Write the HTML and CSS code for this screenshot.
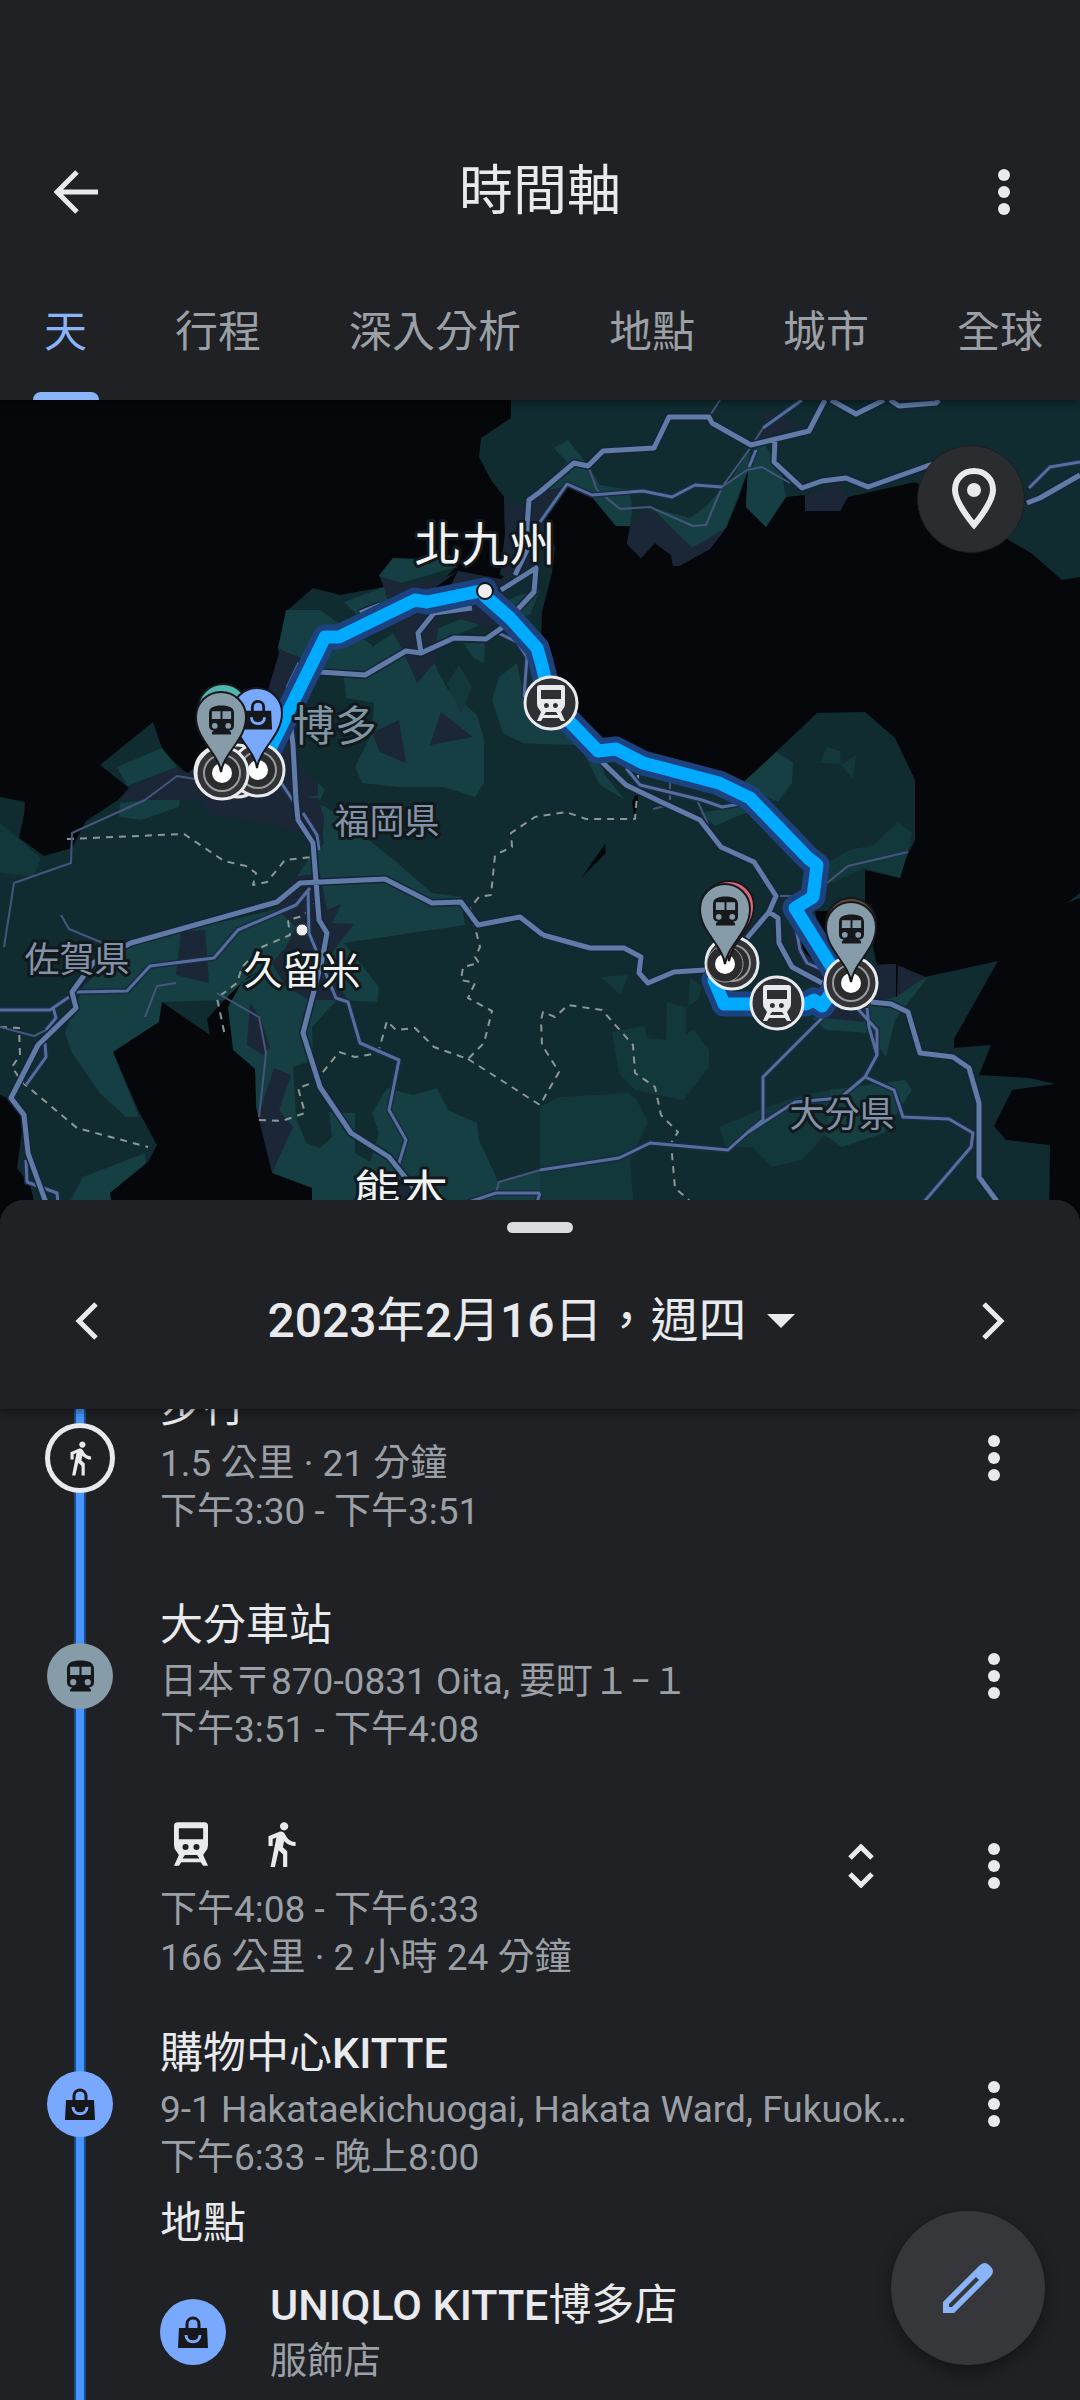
FILE: index.html
```
<!DOCTYPE html>
<html lang="zh-Hant">
<head>
    <meta charset="UTF-8">
    <meta name="viewport" content="width=device-width, initial-scale=1.0">
    <title>時間軸</title>
    <link rel="stylesheet" href="styles.css">
</head>
<body>
    <!-- Shared icons -->
    <svg class="sprite" aria-hidden="true">
        <symbol id="icon-more" viewBox="0 0 12 46">
            <circle cx="6" cy="6" r="6"/><circle cx="6" cy="23" r="6"/><circle cx="6" cy="40" r="6"/>
        </symbol>
        <symbol id="icon-walk" viewBox="0 0 24 24">
            <path d="M13.5 5.5c1.1 0 2-.9 2-2s-.9-2-2-2-2 .9-2 2 .9 2 2 2zM9.8 8.9L7 23h2.1l1.8-8 2.1 2v6h2v-7.5l-2.1-2 .6-3C14.8 12 16.8 13 19 13v-2c-1.9 0-3.5-1-4.3-2.4l-1-1.6c-.4-.6-1-1-1.7-1-.3 0-.5.1-.8.1L6 8.3V13h2V9.6l1.8-.7z"/>
        </symbol>
        <symbol id="icon-station" viewBox="0 0 26 30">
            <path fill-rule="evenodd" d="M0 8C0 2 5 0 13 0s13 2 13 8v13c0 3-2 5-5 5l2 2v2H3v-2l2-2c-3 0-5-2-5-5zM3 6v8h9V6zM14 6v8h9V6zM6 18a3 3 0 1 0 0 6 3 3 0 0 0 0-6zM20 18a3 3 0 1 0 0 6 3 3 0 0 0 0-6z"/>
        </symbol>
        <symbol id="icon-train" viewBox="0 0 28 36">
            <path fill-rule="evenodd" d="M3 0h22q3 0 3 3v16q0 3-2 5l-2 3 4 9h-4l-2-3H6l-2 3H0l4-9-2-3q-2-2-2-5V3q0-3 3-3zM4 5v9h20V5zM9.500 18a2.500 2.500 0 1 0 0 5 2.500 2.500 0 0 0 0-5zM18.500 18a2.500 2.500 0 1 0 0 5 2.500 2.500 0 0 0 0-5zM9 27l-2 3h14l-2-3z"/>
        </symbol>
        <symbol id="icon-bag" viewBox="0 0 32 32">
            <path fill="none" stroke="currentColor" stroke-width="3" d="M10 14V8c0-8 12-8 12 0v6"/>
            <path d="M2 12h28l1 20H1z"/>
            <path class="smile" d="M9 19c0 9 14 9 14 0"/>
        </symbol>
        <symbol id="pin" viewBox="-28 -80 56 84" overflow="visible">
            <path stroke="#17181b" stroke-width="2" d="M0 2C-3-18-25-30-25-53a25 25 0 0 1 50 0C25-30 3-18 0 2z"/>
        </symbol>
        <symbol id="stop" viewBox="-29 -29 58 58">
            <circle r="26" fill="#333437" stroke="#e8eaed" stroke-width="3"/>
            <circle r="18" fill="#2b2c2e" stroke="#9a9b9c" stroke-width="2"/>
            <circle r="10" fill="#fff"/>
        </symbol>
        <symbol id="train-badge" viewBox="-29 -29 58 58">
            <circle r="26" fill="#2f3034" stroke="#e8eaed" stroke-width="3"/>
            <use href="#icon-train" x="-14" y="-18" width="28" height="36" fill="#e8eaed"/>
        </symbol>
    </svg>

    <div class="app">
        <header class="top">
            <div class="toolbar">
                <button class="icon-btn" aria-label="返回">
                    <svg class="back-icon" viewBox="0 0 44 44"><path d="M44 22H4M23 2L3 22l20 20"/></svg>
                </button>
                <h1>時間軸</h1>
                <button class="icon-btn" aria-label="更多選項"><svg class="more-icon"><use href="#icon-more"/></svg></button>
            </div>
            <nav class="tabs">
                <a href="#day" class="active">天</a>
                <a href="#trips">行程</a>
                <a href="#insights">深入分析</a>
                <a href="#places">地點</a>
                <a href="#cities">城市</a>
                <a href="#world">全球</a>
            </nav>
        </header>

        <!-- Map -->
        <section class="map" aria-label="地圖">
            <svg class="map-canvas" viewBox="0 0 1080 824" preserveAspectRatio="xMidYMin slice">
                <!-- land -->
                <g class="land">
                    <polygon points="511,0 511,18 481,38 479,57 491,80 504,97 505,133 516,165 540,180 555,147 543,120 568,87 592,97 616,126 630,126 627,144 641,158 655,143 671,155 673,166 679,166 710,149 726,128 738,100 748,70 746,107 766,127 786,97 805,95 805,111 840,111 848,97 884,89 915,82 1005,138 1031,153 1062,180 1080,177 1080,0"/>
                    <polygon points="0,397 25,402 24,415 19,438 44,456 72,448 86,421 118,400 129,388 100,365 153,322 163,351 187,374 225,340 268,290 280,272 278,248 288,210 313,188 340,195 384,187 379,175 393,158 425,163 450,155 456,167 436,187 458,171 500,180 516,165 555,147 552,173 542,212 541,245 553,300 580,330 600,350 660,360 720,380 765,383 760,367 817,313 865,312 895,338 915,380 915,440 905,460 900,478 865,470 865,511 877,565 895,564 925,577 998,561 954,639 954,648 991,645 979,675 1030,678 1055,684 1012,690 994,726 1006,740 1050,745 1049,824 0,824"/>
                    <polygon points="1067,503 1080,493 1080,498"/>
                </g>
                <g class="woods">
                    <polygon points="554,48 568,40 588,65 600,85 630,90 632,110 630,126 616,126 592,97 568,87 548,112 550,80 567,62"/>
                    <polygon points="652,108 692,148 726,128 748,70 750,47 733,77 705,107 690,118"/>
                    <polygon points="748,67 760,37 781,70 786,97 766,127 746,107"/>
                    <polygon points="379,176 393,158 451,160 456,167 401,183"/>
                    <polygon points="286,210 320,210 344,227 372,245 370,255 344,278 320,270 278,248"/>
                    <polygon points="344,202 384,187 392,215 365,223"/>
                    <polygon points="372,247 393,233 413,267 417,283 434,263 448,290 477,315 484,340 484,383 475,397 444,387 399,387 362,383 355,367 372,333 374,303 346,298 344,277"/>
                    <polygon points="427,233 470,215 520,195 540,190 530,215 480,225 432,245"/>
                    <polygon points="463,243 485,243 484,263 474,258"/>
                    <polygon points="499,277 517,263 524,297 545,300 575,335 595,348 605,375 625,400 600,385 580,345 540,344 523,343 503,333 492,300"/>
                    <polygon points="760,367 776,352 793,362 792,383 778,402 740,385"/>
                    <polygon points="117,367 162,348 177,367 127,386"/>
                    <polygon points="120,403 180,396 179,407 141,420 119,417"/>
                    <polygon points="295,365 318,383 325,390 320,400 300,395"/>
                    <polygon points="317,403 331,410 394,460 432,493 461,497 465,525 344,543 379,587 377,602 337,600 312,627 313,660 293,667 296,717 306,743 320,748 332,737 329,712 355,713 355,753 370,762 379,733 372,713 387,688 413,695 437,688 448,710 477,723 479,740 499,783 540,770 540,824 312,824 312,788 272,773 256,707 255,669 233,650 227,600 162,602 159,622 113,652 139,717 126,717 100,693 72,653 65,633 83,587 127,543 275,510 310,457 324,443"/>
                    <polygon points="83,777 145,753 146,763 110,793 115,824 58,824"/>
                    <polygon points="869,603 928,577 895,620 886,657 870,633 826,630 812,618"/>
                    <polygon points="830,690 905,680 912,690 884,733 842,747 825,735"/>
                    <polygon points="700,413 775,400 715,426"/>
                </g>
                <g class="scrub">
                    <polygon points="0,423 41,458 33,477 0,473"/>
                    <polygon points="540,707 560,697 629,693 637,700 648,723 630,760 635,824 540,824"/>
                    <polygon points="612,632 645,626 647,638 666,640 667,602 688,608 690,577 702,587 698,600 686,607 686,635 693,629 709,650 709,667 683,700 635,690 619,673"/>
                    <polygon points="719,727 753,713 795,697 830,690 825,735 802,760 771,767 753,747 726,747"/>
                    <polygon points="815,470 850,450 874,445 898,422 912,433 908,452 900,478 864,468 833,483"/>
                    <polygon points="827,347 840,351 841,365 856,355 853,379 840,364 820,363"/>
                    <polygon points="600,577 628,575 621,595"/>
                    <polygon points="447,283 459,265 472,287 461,314"/>
                </g>
                <g class="urban">
                    <polygon points="504,97 525,110 540,92 566,86 545,120 540,150 525,170 512,180 500,175 505,133"/>
                    <polygon points="630,126 650,108 692,148 726,128 710,149 679,166 673,166 671,155 655,143 641,158 627,144"/>
                    <polygon points="805,95 840,83 848,97 840,111 805,111"/>
                    <polygon points="764,10 802,25 781,33 762,37"/>
                    <polygon points="380,177 401,183 440,180 458,171 506,180 510,205 490,228 440,213 434,263 417,283 396,235 389,200"/>
                    <polygon points="280,250 320,265 300,320 295,365 318,383 318,395 295,400 190,400 187,374 230,340 268,290"/>
                    <polygon points="195,398 318,398 324,418 322,443 300,433 262,423 213,415"/>
                    <polygon points="399,320 406,363 380,352 372,333"/>
                    <polygon points="441,312 473,337 430,345"/>
                    <polygon points="129,388 177,367 195,377 195,400 120,400"/>
                    <polygon points="181,532 205,530 209,583 176,575"/>
                    <polygon points="293,477 320,473 327,510 341,504 332,523 354,524 324,563 348,600 310,600 286,587 272,563 286,547 296,527 275,507"/>
                    <polygon points="250,603 260,617 270,647 263,655 247,645"/>
                    <polygon points="274,668 291,675 279,710 293,727 272,773 258,717"/>
                    <polygon points="390,780 420,775 430,824 390,824"/>
                    <polygon points="796,515 830,560 877,565 895,564 925,577 896,597 869,603 864,622 826,618 800,560 788,540"/>
                </g>
                <g class="water">
                    <polygon points="162,602 210,635 207,619 227,597 248,577 262,570 242,582 228,607 233,650 255,669 256,707 272,773 312,788 312,824 115,824 110,793 148,762 157,745 139,712 113,652 159,622"/>
                    <polygon points="0,695 11,700 24,717 17,768 30,785 40,824 0,824"/>
                    <polygon points="605,444 606,453 582,477"/>
                    <polygon points="815,511 865,511 865,560 829,570 800,550 802,540 820,535"/>
                    <polygon points="632,402 638,390 638,405 634,416"/>
                    <polygon points="896,564 898,564 897,597 896,597"/>
                    <polygon points="436,187 458,171 450,187"/>
                </g>

                <!-- prefecture borders -->
                <g class="border">
                    <path d="M67 439L184 434 224 461 246 466 256 473 253 485 267 482 285 460 312 457 317 473 318 500 303 516 288 520 290 535 262 547 242 567 237 583 217 598 225 636"/>
                    <path d="M638 375V385L635 419H586L566 412 535 417 511 433 512 447 495 455 491 495 479 497 470 508 480 547 475 557 479 563 463 567 461 580 475 583 468 598 492 611 484 643 468 659 434 647 415 628 396 630 387 621 378 653 355 657 339 652 315 682 298 688 305 713 282 721 258 720"/>
                    <path d="M468 659L540 705 559 672 542 645 541 620 543 612 555 617 568 605 602 610 633 645 635 673 655 687 661 715 678 732 671 743 675 788 700 810"/>
                    <path d="M0 627L19 628 20 655 12 667 22 682 77 728 148 747"/>
                </g>

                <!-- roads -->
                <g class="road-thin">
                    <path d="M589 68L597 90 620 109 650 107 693 126 706 125 722 87 751 47 763 28M722 87L747 70 762 67 790 83M709 17L720 0"/>
                    <path d="M195 379L177 376 145 400 72 433 71 463 14 483 4 547M61 515L69 529 103 543M176 583L157 586 145 617M217 593L259 617 266 653 259 717M0 627L34 636 46 630"/>
                    <path d="M776 496L802 496M827 483L848 466 908 452M697 400L708 424M653 409L665 406M670 382V400M496 793L499 782 540 770"/>
                </g>
                <g class="road-mid-case">
                    <path id="mid" d="M540 122L567 84 592 95 643 91 672 97 695 85 722 87M763 28L802 0M756 50L749 67M1029 88L1050 67 1080 62M76 592L127 591 150 566 214 558 238 530 296 505 310 488M308 490L309 533 336 598 348 602 360 643 399 660 389 710 406 740 399 763M0 610L50 610 69 597M53 607L56 618 46 630M45 643L46 657 26 685M26 760L27 782 57 793 60 824M460 805L496 793 540 793M494 231L517 242 527 257 524 297M287 288L299 263M303 413L317 435 319 450M280 381L294 402M626 368L640 385 702 400 722 407 740 404M540 770L619 758 650 743 728 750 747 733 795 702 840 698 865 677 894 690 903 717 949 719 973 733 971 747 905 824M747 733L763 720 763 677 822 618M865 677L877 655 877 630 857 608M867 608L869 627 877 655M796 528L800 550 807 563 825 571M540 793L530 824"/>
                </g>
                <use href="#mid" class="road-mid"/>
                <g class="road-case">
                    <path id="main" d="M515 175L527 150 527 127 529 100 540 92 574 63 588 66 603 51 654 48 669 17 709 17 712 23 751 45 809 31 825 0M831 0L856 14 884 0M890 0L899 6 936 3 939 0M775 40L774 62 802 88 822 81 846 78 868 87 927 66 950 60M1027 103L1040 98 1080 75M501 190L536 168 534 192 517 210 503 227 486 239 454 238 421 253 406 251 365 275 320 272M472 208L434 213 418 233 421 253M360 213L380 205M291 328L293 345 296 400 298 420 313 443 319 520 327 533 322 560 303 633 320 687 351 733 389 757 413 787 420 824M543 535L520 517 478 525 461 502 432 503 385 479 300 483 277 502 131 543 93 563 72 592 76 608 38 645 11 698 24 715 28 753 45 800 52 824M543 535L590 548 624 548 641 557 639 573 648 583 674 572 705 570M602 362L626 385 657 400 700 420 721 447 754 462 776 496 769 512 747 538M769 512L778 518 779 543 792 567 822 583M871 602L891 604 908 612 920 653 953 657 969 668 979 703 979 777 996 800 1008 824"/>
                </g>
                <use href="#main" class="road"/>

                <!-- travelled route -->
                <g class="route-case">
                    <path id="route" d="M262 365L325 237H339L415 200 427 202 485 190V196L510 218 537 248 541 262 551 303 571 323 598 351 616 349 643 363 719 383 750 398 808 458 817 465 813 497 795 508 840 580M714 580L724 604H806L814 600 822 606 833 590"/>
                </g>
                <use href="#route" class="route"/>

                <!-- labels -->
                <g class="label">
                    <text class="city" x="485" y="161">北九州</text>
                    <text class="area" x="335" y="341">博多</text>
                    <text class="pref" x="387" y="434">福岡県</text>
                    <text class="pref" x="77" y="572">佐賀県</text>
                    <text class="town" x="302" y="584">久留米</text>
                    <text class="city" x="401" y="809">熊本</text>
                    <text class="pref" x="842" y="727">大分県</text>
                </g>
                <circle cx="485" cy="191" r="8" fill="#eee" stroke="#111" stroke-width="2"/>
                <circle cx="302" cy="530" r="6" fill="#eee" stroke="#333" stroke-width="1"/>

                <!-- stops, badges and pins -->
                <use href="#stop" x="192" y="343" width="58" height="58"/>
                <use href="#stop" x="208" y="342" width="58" height="58"/>
                <use href="#stop" x="229" y="341" width="58" height="58"/>
                <use href="#stop" x="193" y="344" width="58" height="58"/>
                <use href="#stop" x="703" y="534" width="58" height="58"/>
                <circle cx="725" cy="564" r="18" fill="#2b2c2e" stroke="#9a9b9c"/>
                <circle cx="725" cy="564" r="10" fill="#fff"/>
                <use href="#stop" x="822" y="554" width="58" height="58"/>
                <use href="#train-badge" x="522" y="274" width="58" height="58"/>
                <use href="#train-badge" x="748" y="574" width="58" height="58"/>

                <use href="#pin" x="195" y="282" width="56" height="84" fill="#50b5ad"/>
                <use href="#pin" x="229" y="286" width="56" height="84" fill="#78a9ff"/>
                <use href="#icon-bag" x="243" y="299" width="30" height="31" class="glyph"/>
                <use href="#pin" x="193" y="290" width="56" height="84" fill="#869ca8"/>
                <use href="#icon-station" x="209" y="305" width="25" height="30" class="glyph"/>
                <use href="#pin" x="701" y="479" width="56" height="84" fill="#e0667f"/>
                <use href="#pin" x="697" y="482" width="56" height="84" fill="#869ca8"/>
                <use href="#icon-station" x="713" y="496" width="25" height="30" class="glyph"/>
                <use href="#pin" x="823" y="496" width="56" height="84" fill="#5d4b42"/>
                <use href="#pin" x="823" y="500" width="56" height="84" fill="#869ca8"/>
                <use href="#icon-station" x="839" y="514" width="25" height="30" class="glyph"/>
            </svg>
            <button class="map-btn" aria-label="顯示地點">
                <svg viewBox="0 0 44 62"><path d="M22 3C11 3 3 11 3 22c0 13 19 35 19 35s19-22 19-35C41 11 33 3 22 3z"/><circle cx="22" cy="22" r="7"/></svg>
            </button>
        </section>

        <!-- Bottom sheet -->
        <main class="sheet">
            <div class="sheet-head">
                <div class="handle"></div>
                <div class="date-row">
                    <button class="day-btn" aria-label="前一天"><svg viewBox="0 0 24 38"><path d="M21 2L4 19l17 17"/></svg></button>
                    <button class="date-btn"><span class="date"><b>2023</b>年<b>2</b>月<b>16</b>日，週四</span><span class="caret"></span></button>
                    <button class="day-btn" aria-label="後一天"><svg viewBox="0 0 24 38"><path d="M3 2l17 17L3 36"/></svg></button>
                </div>
            </div>

            <div class="timeline">
                <article class="entry">
                    <div class="marker-col"><span class="marker walk"><svg><use href="#icon-walk"/></svg></span></div>
                    <div class="info">
                        <h2>步行</h2>
                        <p>1.5 公里 · 21 分鐘</p>
                        <p>下午3:30 - 下午3:51</p>
                    </div>
                    <button class="more" aria-label="更多選項"><svg class="more-icon"><use href="#icon-more"/></svg></button>
                </article>

                <article class="entry stop">
                    <div class="marker-col"><span class="marker station"><svg><use href="#icon-station"/></svg></span></div>
                    <div class="info">
                        <h2>大分車站</h2>
                        <p>日本〒870-0831 Oita, 要町１−１</p>
                        <p>下午3:51 - 下午4:08</p>
                    </div>
                    <button class="more" aria-label="更多選項"><svg class="more-icon"><use href="#icon-more"/></svg></button>
                </article>

                <article class="entry travel">
                    <div class="marker-col"></div>
                    <div class="info">
                        <div class="modes">
                            <svg class="mode-train"><use href="#icon-train"/></svg>
                            <svg class="mode-walk"><use href="#icon-walk"/></svg>
                        </div>
                        <p>下午4:08 - 下午6:33</p>
                        <p>166 公里 · 2 小時 24 分鐘</p>
                    </div>
                    <button class="expand" aria-label="展開"><svg viewBox="0 0 26 44"><path d="M2 14L13 3l11 11M2 30l11 11 11-11"/></svg></button>
                    <button class="more" aria-label="更多選項"><svg class="more-icon"><use href="#icon-more"/></svg></button>
                </article>

                <article class="entry">
                    <div class="marker-col"><span class="marker shop"><svg><use href="#icon-bag"/></svg></span></div>
                    <div class="info">
                        <h2>購物中心<b>KITTE</b></h2>
                        <p>9-1 Hakataekichuogai, Hakata Ward, Fukuoka, 日本</p>
                        <p>下午6:33 - 晚上8:00</p>
                    </div>
                    <button class="more" aria-label="更多選項"><svg class="more-icon"><use href="#icon-more"/></svg></button>
                </article>

                <section class="places">
                    <h3>地點</h3>
                    <div class="place">
                        <span class="marker shop"><svg><use href="#icon-bag"/></svg></span>
                        <div class="info">
                            <h2><b>UNIQLO KITTE</b>博多店</h2>
                            <p>服飾店</p>
                        </div>
                    </div>
                </section>
            </div>
        </main>

        <button class="fab" aria-label="編輯">
            <svg viewBox="0 0 50 50"><path fill-rule="evenodd" d="M0 50V39L37 2q5-4 9 0l2 2q4 4 0 9L11 50zM6 44h3l27-27-3-3L6 41z"/></svg>
        </button>
    </div>
</body>
</html>
```
FILE: styles.css
```
* {
    box-sizing: border-box;
}
body {
    margin: 0;
    background: #202124;
    color: #e8eaed;
    font-family: Roboto, "Noto Sans CJK TC", sans-serif;
}
h1, h2, h3, p {
    margin: 0;
    font-weight: 400;
}
b {
    font-weight: 500;
}
button {
    border: 0;
    padding: 0;
    background: none;
    color: inherit;
    font: inherit;
    cursor: pointer;
    display: flex;
    align-items: center;
    justify-content: center;
}
svg {
    display: block;
    fill: currentColor;
}
.sprite {
    position: absolute;
    width: 0;
    height: 0;
}
.app {
    position: relative;
    height: 100vh;
    display: flex;
    flex-direction: column;
    overflow: hidden;
}

/* Header */
.top {
    padding-top: 112px;
    position: relative;
    z-index: 1;
    background: #202124;
    box-shadow: 0 2px 8px rgba(0, 0, 0, 0.5);
}
.toolbar {
    display: flex;
    align-items: center;
    justify-content: space-between;
    height: 152px;
    padding-top: 8px;
}
.toolbar h1 {
    font-size: 54px;
    line-height: 64px;
}
.icon-btn {
    width: 152px;
    height: 96px;
}
.back-icon {
    width: 44px;
    height: 44px;
    fill: none;
    stroke: currentColor;
    stroke-width: 5;
}
.more-icon {
    width: 12px;
    height: 46px;
}
.tabs {
    display: flex;
    height: 136px;
    overflow: hidden;
}
.tabs a {
    flex: none;
    position: relative;
    padding: 0 44px;
    font-size: 43px;
    line-height: 136px;
    color: #9aa0a6;
    text-decoration: none;
}
.tabs .active {
    color: #8ab4f8;
}
.tabs .active::after {
    content: "";
    position: absolute;
    left: 33px;
    right: 32px;
    bottom: 0;
    height: 8px;
    border-radius: 8px 8px 0 0;
    background: #8ab4f8;
}

/* Map */
.map {
    position: relative;
    flex: none;
    height: calc(34vh + 8px);
    background: #05070a;
}
.map-canvas {
    width: 100%;
    height: 100%;
}
.land { fill: #102c31; }
.woods { fill: #153f42; }
.scrub { fill: #13383c; }
.urban { fill: #1b2636; }
.water { fill: #05070a; }
/* the <use> copies repaint the same paths over their casing */
.border, .road, .road-case, .road-mid, .road-mid-case, .road-thin, .route, .route-case {
    fill: none;
    stroke-linejoin: round;
}
.border {
    stroke: #8c9796;
    stroke-width: 2;
    stroke-dasharray: 7 6;
}
.road-thin {
    stroke: #46557b;
    stroke-width: 2;
}
.road-mid-case {
    stroke: #1b2a45;
    stroke-width: 6;
}
.road-mid {
    stroke: #546f9b;
    stroke-width: 3;
}
.road-case {
    stroke: #17233a;
    stroke-width: 8;
}
.road {
    stroke: #607ca6;
    stroke-width: 5;
}
.route-case {
    stroke: #1c427f;
    stroke-width: 25;
    stroke-linecap: round;
}
.route {
    stroke: #00aaff;
    stroke-width: 13;
    stroke-linecap: round;
}
.label {
    font-family: "Noto Sans CJK JP", sans-serif;
    text-anchor: middle;
    paint-order: stroke;
    stroke: #12191c;
    stroke-width: 6;
    stroke-linejoin: round;
}
.city {
    font-size: 47px;
    fill: #f1f3f4;
}
.town {
    font-size: 39px;
    fill: #f1f3f4;
}
.area {
    font-size: 42px;
    fill: #7f95a3;
}
.pref {
    font-size: 35px;
    fill: #8292a8;
}
.glyph {
    color: #17181b;
}
.smile {
    fill: none;
    stroke: #78a9ff;
    stroke-width: 3;
}
.map-btn {
    position: absolute;
    top: 45px;
    right: 55px;
    width: 108px;
    height: 108px;
    padding-left: 6px;
    border-radius: 50%;
    background: #2b2c30;
    border: 1px solid #1c1d20;
}
.map-btn svg {
    width: 44px;
    height: 62px;
}
.map-btn path {
    fill: none;
    stroke: currentColor;
    stroke-width: 6;
}

/* Bottom sheet */
.sheet {
    position: relative;
    flex: 1;
    min-height: 0;
    margin-top: -24px;
    border-radius: 24px 24px 0 0;
    background: #202124;
    overflow: hidden;
}
.sheet-head {
    position: relative;
    z-index: 1;
    padding-top: 22px;
    background: #202124;
    box-shadow: 0 2px 10px rgba(0, 0, 0, 0.5);
}
.handle {
    width: 66px;
    height: 11px;
    margin: 0 auto;
    border-radius: 6px;
    background: #dadce0;
}
.date-row {
    display: flex;
    align-items: center;
    justify-content: space-between;
    height: 176px;
}
.day-btn {
    width: 174px;
    height: 96px;
}
.day-btn svg {
    width: 24px;
    height: 38px;
    fill: none;
    stroke: currentColor;
    stroke-width: 5;
}
.date-btn {
    padding-right: 18px;
    font-size: 48px;
    line-height: 64px;
    gap: 20px;
}
.caret {
    border: 14px solid transparent;
    border-top-color: currentColor;
    border-bottom: 0;
}

/* Timeline */
.timeline {
    position: relative;
    margin-top: -35px;
}
.timeline::before {
    content: "";
    position: absolute;
    top: 0;
    left: 74px;
    width: 8px;
    height: 100vh;
    border: solid #1f4a87;
    border-width: 0 2px;
    background: #4796ff;
}
.entry {
    position: relative;
    display: flex;
    align-items: center;
    padding-right: 18px;
}
.entry.stop {
    margin-top: 56px;
}
.entry.travel {
    align-items: flex-start;
    margin: 48px 0 38px;
}
.marker-col {
    flex: none;
    width: 160px;
    padding-top: 6px;
}
.marker {
    display: flex;
    align-items: center;
    justify-content: center;
    flex: none;
    width: 66px;
    height: 66px;
    margin: 0 auto;
    border-radius: 50%;
    color: #17181b;
}
.marker.walk {
    width: 70px;
    height: 70px;
    border: 5px solid #e8eaed;
    background: #202124;
    color: #e8eaed;
}
.marker.walk svg {
    width: 38px;
    height: 38px;
}
.marker.station {
    background: #869ca8;
}
.marker.station svg {
    width: 27px;
    height: 32px;
}
.marker.shop {
    background: #78a9ff;
}
.marker.shop svg {
    width: 32px;
    height: 32px;
}
.info {
    flex: 1;
    min-width: 0;
}
.info h2, .places h3 {
    font-size: 43px;
    line-height: 66px;
}
.info p {
    font-size: 37px;
    line-height: 48px;
    color: #9aa0a6;
    white-space: nowrap;
    overflow: hidden;
    text-overflow: ellipsis;
}
.more {
    flex: none;
    width: 136px;
    height: 96px;
    padding-top: 6px;
}
.expand {
    flex: none;
    width: 130px;
}
.travel .more, .expand {
    height: 128px;
    padding: 0;
}
.expand svg {
    width: 26px;
    height: 44px;
    fill: none;
    stroke: currentColor;
    stroke-width: 5;
}
.modes {
    display: flex;
    align-items: center;
    gap: 48px;
    height: 84px;
    padding-left: 14px;
}
.mode-train {
    width: 34px;
    height: 44px;
}
.mode-walk {
    width: 50px;
    height: 50px;
}
.places {
    position: relative;
    padding-left: 160px;
}
.places h3 {
    line-height: 82px;
}
.place {
    display: flex;
    align-items: center;
    gap: 44px;
    margin-top: 8px;
}
.place .marker {
    margin: 6px 0 0;
}
.fab {
    position: absolute;
    right: 35px;
    bottom: 35px;
    width: 154px;
    height: 154px;
    border-radius: 50%;
    background: #36373a;
    color: #8ab4f8;
    box-shadow: 0 6px 16px rgba(0, 0, 0, 0.4);
}
.fab svg {
    width: 50px;
    height: 50px;
}
```
